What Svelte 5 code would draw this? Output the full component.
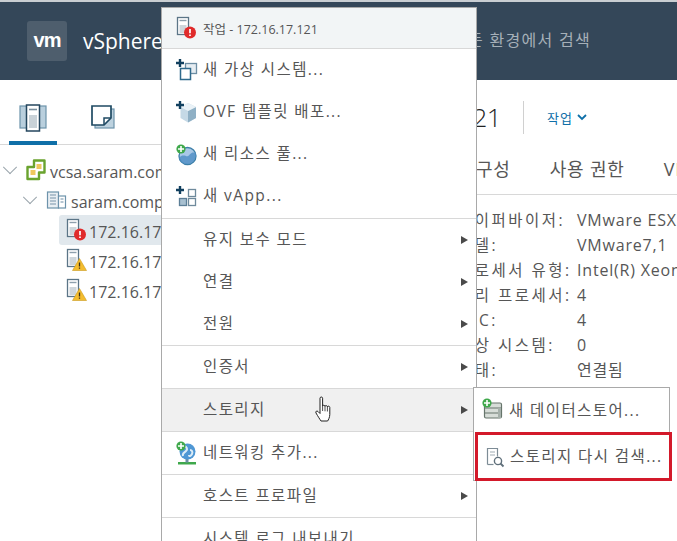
<script>
  const menu = [
    { group: true, items: [
      { label: '새 가상 시스템...', icon: 'vm' },
      { label: 'OVF 템플릿 배포...', icon: 'ovf' },
      { label: '새 리소스 풀...', icon: 'pool' },
      { label: '새 vApp...', icon: 'vapp' }
    ]},
    { items: [
      { label: '유지 보수 모드', sub: true },
      { label: '연결', sub: true },
      { label: '전원', sub: true }
    ]},
    { items: [{ label: '인증서', sub: true }] },
    { items: [{ label: '스토리지', sub: true, hover: true }] },
    { items: [{ label: '네트워킹 추가...', icon: 'net' }] },
    { items: [{ label: '호스트 프로파일', sub: true }] },
    { items: [{ label: '시스템 로그 내보내기' }] }
  ];

  const facts = [
    ['하이퍼바이저:', 'VMware ESXi, 7.0.0'],
    ['모델:', 'VMware7,1'],
    ['프로세서 유형:', 'Intel(R) Xeon(R) CPU'],
    ['논리 프로세서:', '4'],
    ['NIC:', '4'],
    ['가상 시스템:', '0'],
    ['상태:', '연결됨']
  ];

  const hosts = [
    { name: '172.16.17.121', state: 'err', selected: true },
    { name: '172.16.17.122', state: 'warn' },
    { name: '172.16.17.123', state: 'warn' }
  ];
</script>

{#snippet plus(x, y)}
  <path d="M{x - 4} {y}h8M{x} {y - 4}v8" stroke="#12405f" stroke-width="2.4" fill="none" />
{/snippet}

{#snippet greenPlus(x, y)}
  <circle cx={x} cy={y} r="4.6" fill="#3fa84b" />
  <path d="M{x - 3} {y}h6M{x} {y - 3}v6" stroke="#fff" stroke-width="1.6" />
{/snippet}

{#snippet host(state)}
  <svg class="icon" width="22" height="24" viewBox="0 0 22 24">
    <rect x="1.5" y="1.5" width="11" height="17" fill="#fff" stroke="#5b7587" stroke-width="1.3" />
    <rect x="3.5" y="9" width="7" height="8" fill="#cfd6db" />
    <path d="M3.5 4.5h7" stroke="#8ea0ad" stroke-width="1.4" />
    {#if state === 'err'}
      <circle cx="14" cy="16.5" r="6" fill="#e02b2b" />
      <path d="M14 13v4.2M14 18.6v1.4" stroke="#fff" stroke-width="1.7" />
    {:else}
      <path d="M13.5 10.5L20.5 22.5H6.5Z" fill="#f4bc2e" stroke="#c99a1c" stroke-width=".6" />
      <path d="M13.5 14.5v4M13.5 19.5v1.3" stroke="#3a3018" stroke-width="1.3" />
    {/if}
  </svg>
{/snippet}

{#snippet menuIcon(name)}
  <svg class="icon" width="24" height="24" viewBox="0 0 24 24">
    {#if name === 'vm'}
      <rect x="10.5" y="5.500" width="11" height="10" fill="#e6edf2" stroke="#6d8ea4" stroke-width="1.300" />
      <rect x="5.500" y="10.500" width="10" height="11" fill="#fff" stroke="#2f6a8c" stroke-width="1.500" />
      {@render plus(5, 5)}
    {:else if name === 'ovf'}
      <path d="M13 3l8 4v11l-8 4.500L5.500 18V7Z" fill="#c5d9e6" />
      <path d="M13 11l8-4v11l-8 4.500Z" fill="#8fb0c5" />
      <path d="M5.500 7L13 3l8 4-8 4Z" fill="#eaf2f7" />
      {@render plus(5, 5)}
    {:else if name === 'pool'}
      <circle cx="12.500" cy="13" r="8.500" fill="#a9c8e6" stroke="#3c7fa8" stroke-width="1.300" />
      <path d="M4 15c4-5 7-1 9-2s3-5 8-3c.5 7-4 11-8.500 11S5 19 4 15Z" fill="#4e8dc4" opacity=".8" />
      {@render greenPlus(6, 6)}
    {:else if name === 'vapp'}
      <rect x="13.500" y="4.500" width="7" height="7" fill="#fff" stroke="#6f8a9c" stroke-width="1.300" />
      <rect x="4.500" y="13.500" width="7" height="7" fill="#a8c0d0" stroke="#5c7f97" stroke-width="1.300" />
      <rect x="13.500" y="13.500" width="7" height="7" fill="#fff" stroke="#6f8a9c" stroke-width="1.300" />
      {@render plus(5, 5)}
    {:else if name === 'net'}
      <path d="M3 21h18v2.500H3Z" fill="#3fa84b" />
      <rect x="10.500" y="17" width="3" height="4.500" fill="#6d8ea4" />
      <circle cx="12.500" cy="10.500" r="8" fill="#4f97d4" />
      <path d="M9 5c3 1 4 3 2 5s-4 2-3 5M15 9c2 0 3 2 2 4s-3 3-3 1" stroke="#dcecf7" stroke-width="2" fill="none" />
      {@render greenPlus(6, 5)}
    {:else if name === 'store'}
      <rect x="3.500" y="5" width="17" height="15" rx="1.500" fill="#d7ddd8" stroke="#66756b" stroke-width="1.200" />
      <path d="M3.500 10h17M3.500 15h17" stroke="#66756b" stroke-width="1.200" />
      <path d="M17 10h3v10h-3Z" fill="#a5b0aa" />
      {@render greenPlus(6, 5)}
    {:else if name === 'rescan'}
      <path d="M4.500 19.500V3.500h10v8" fill="#fff" stroke="#7d8c96" stroke-width="1.200" />
      <path d="M4.500 19.500h6" stroke="#7d8c96" stroke-width="1.200" />
      <path d="M7 7h5M7 10h5" stroke="#9fabb3" stroke-width="1.200" />
      <circle cx="15" cy="16" r="3.600" fill="none" stroke="#5f6f7a" stroke-width="1.400" />
      <path d="M17.500 18.500l3 3" stroke="#5f6f7a" stroke-width="1.800" />
    {/if}
  </svg>
{/snippet}

<div class="page">
  <header class="topbar">
    <div class="logo">vm</div>
    <div class="product">vSphere Client</div>
    <div class="search">모든 환경에서 검색</div>
  </header>

  <div class="content">
    <aside class="sidebar">
      <div class="side-tabs">
        <div class="side-tab active">
          <svg width="30" height="28" viewBox="0 0 30 28">
            <rect x="2" y="2" width="26" height="22" fill="#b9cfdd" stroke="#6d93ab" stroke-width="1.200" />
            <rect x="8.500" y="1" width="13" height="26" fill="#fff" stroke="#24465e" stroke-width="1.500" />
            <rect x="11" y="11" width="8" height="13" fill="#c9d2d8" />
            <path d="M11 5.500h8" stroke="#7a8f9e" stroke-width="1.600" />
          </svg>
        </div>
        <div class="side-tab">
          <svg width="26" height="26" viewBox="0 0 26 26">
            <rect x="5" y="5" width="19" height="19" fill="#bdd2df" stroke="#6d93ab" stroke-width="1.200" />
            <path d="M2 2h19v12l-7 7H2Z" fill="#fff" stroke="#1f4a63" stroke-width="1.700" />
            <path d="M21 14h-7v7" fill="none" stroke="#1f4a63" stroke-width="1.500" />
          </svg>
        </div>
      </div>
      <ul class="tree">
        <li class="node">
          <span class="caret"></span>
          <svg class="icon" width="20" height="22" viewBox="0 0 20 22">
            <path d="M8 1.500h10.500v12H13v6.500H1.500V8H8Z" fill="#fff" stroke="#6aa32e" stroke-width="2.400" stroke-linejoin="round" />
            <rect x="4.500" y="11" width="5" height="5" fill="#efc75e" />
            <rect x="10.500" y="5" width="5" height="5" fill="#efc75e" />
          </svg>
          <span class="name">vcsa.saram.com</span>
        </li>
        <li class="node level-1">
          <span class="caret"></span>
          <svg class="icon" width="21" height="20" viewBox="0 0 21 20">
            <rect x="1.500" y="2" width="11" height="16" fill="#e9eff3" stroke="#6d93ab" stroke-width="1.200" />
            <rect x="12.500" y="6" width="7" height="12" fill="#fff" stroke="#6d93ab" stroke-width="1.200" />
            <path d="M4 5h6M4 8h6M4 11h6M4 14h6M14.500 9h3M14.500 12h3" stroke="#9db3c2" stroke-width="1.300" />
          </svg>
          <span class="name">saram.company</span>
        </li>
        {#each hosts as h}
          <li class="node level-2" class:selected={h.selected}>
            {@render host(h.state)}
            <span class="name">{h.name}</span>
          </li>
        {/each}
      </ul>
    </aside>

    <main class="main">
      <div class="title-row">
        <h1>172.16.17.121</h1>
        <div class="rule"></div>
        <div class="actions">작업
          <svg width="10" height="7" viewBox="0 0 10 7"><path d="M1 1l4 4 4-4" fill="none" stroke="#0f6fa8" stroke-width="1.800" /></svg>
        </div>
      </div>
      <nav class="tabs">
        <span>구성</span>
        <span>사용 권한</span>
        <span>VM</span>
      </nav>
      <dl class="facts">
        {#each facts as [k, v]}
          <dt>{k}</dt>
          <dd>{v}</dd>
        {/each}
      </dl>
    </main>
  </div>

  <div class="menu">
    <div class="menu-head">
      {@render host('err')}
      <span>작업 - 172.16.17.121</span>
    </div>
    {#each menu as section}
      <div class="section" class:first={section.group}>
        {#each section.items as item}
          <div class="item" class:hover={item.hover}>
            <span class="slot">
              {#if item.icon}{@render menuIcon(item.icon)}{/if}
            </span>
            <span class="label">{item.label}</span>
            {#if item.sub}<span class="arrow"></span>{/if}
          </div>
        {/each}
      </div>
    {/each}
  </div>

  <div class="submenu">
    <div class="sub-item">
      {@render menuIcon('store')}
      <span>새 데이터스토어...</span>
    </div>
    <div class="sub-item marked">
      {@render menuIcon('rescan')}
      <span>스토리지 다시 검색...</span>
    </div>
  </div>

  <svg class="cursor" width="20" height="27" viewBox="0 0 20 27">
    <path d="M6 2.200c0-1.600 2.600-1.600 2.600 0V10c0-1 2.400-1 2.400.3 0-1 2.400-1 2.400.4 .2-.9 2.400-.8 2.400.7v7c0 3-1.500 5.600-2.200 6.600H7c-1-1.500-3-4.500-5-8-.9-1.600.9-2.600 2-1.500l2 2Z" fill="#fff" stroke="#222" stroke-width="1" stroke-linejoin="round" />
    <path d="M8.600 10v5M11 10.300v5M13.400 10.700v4.800" stroke="#222" stroke-width=".8" fill="none" />
  </svg>
</div>

<style>
  :global(body) {
    margin: 0;
    background: #fff;
  }

  .page {
    position: relative;
    width: 677px;
    height: 541px;
    overflow: hidden;
    font-family: "Open Sans", "Noto Sans CJK KR", sans-serif;
    color: #565656;
    background: #fff;
  }

  .topbar {
    display: flex;
    align-items: center;
    height: 78px;
    border-top: 2px solid #c9ced2;
    background: #344759;
    color: #fff;
    padding-left: 27px;
  }

  .logo {
    width: 40px;
    height: 40px;
    border-radius: 3px;
    background: #4e5e6d;
    text-align: center;
    font: 700 20px/38px "Liberation Sans", sans-serif;
    letter-spacing: -1px;
  }

  .product {
    margin-left: 16px;
    font-size: 21px;
    white-space: nowrap;
    width: 369px;
  }

  .search {
    font-size: 16px;
    letter-spacing: 1.300px;
    color: #a6b0b8;
    white-space: nowrap;
    padding-bottom: 4px;
  }

  .content {
    display: flex;
  }

  .sidebar {
    width: 300px;
    flex: none;
  }

  .side-tabs {
    display: flex;
    height: 64px;
    border-bottom: 1px solid #d8d8d8;
    padding-left: 9px;
  }

  .side-tab {
    width: 48px;
    margin-right: 22px;
    padding-top: 24px;
    box-sizing: border-box;
    text-align: center;
  }

  .side-tab.active {
    border-bottom: 4px solid #0f6fa8;
    height: 65px;
  }

  .tree {
    list-style: none;
    margin: 10px 0 0;
    padding: 0;
    font-size: 16px;
  }

  .node {
    display: flex;
    align-items: center;
    height: 30px;
    white-space: nowrap;
    padding-left: 4px;
  }

  .node .icon {
    flex: none;
    margin-right: 4px;
  }

  .name {
    padding-top: 3px;
  }

  .level-1 {
    padding-left: 24px;
  }

  .level-2 {
    margin-left: 59px;
    padding-left: 7px;
    border-radius: 3px 0 0 3px;
  }

  .level-2 .icon {
    margin-right: 1px;
  }

  .selected {
    background: #e1e8ed;
  }

  .caret {
    width: 9px;
    height: 9px;
    border-right: 1.500px solid #9aa5ac;
    border-bottom: 1.500px solid #9aa5ac;
    transform: rotate(45deg) translate(-2px, -2px);
    margin-right: 11px;
    margin-left: 1px;
  }

  .main {
    flex: 1;
    min-width: 0;
    white-space: nowrap;
  }

  .title-row {
    display: flex;
    align-items: center;
    height: 54px;
    margin-top: 10px;
  }

  h1 {
    width: 201px;
    margin: 0;
    font-size: 26px;
    font-weight: 300;
    color: #222;
    text-align: right;
    letter-spacing: -.6px;
  }

  .rule {
    width: 1px;
    height: 33px;
    background: #d0d0d0;
    margin-left: 22px;
  }

  .actions {
    margin-left: 23px;
    font-size: 13px;
    color: #0f6fa8;
    letter-spacing: 1px;
    display: flex;
    align-items: center;
    gap: 4px;
  }

  .tabs {
    display: flex;
    gap: 39px;
    height: 51px;
    padding-left: 176px;
    padding-top: 12px;
    border-bottom: 1px solid #d8d8d8;
    font-size: 18px;
    letter-spacing: .8px;
    line-height: 26px;
    box-sizing: border-box;
  }

  .facts {
    display: grid;
    grid-template-columns: 119px auto;
    grid-auto-rows: 25px;
    margin: 14px 0 0 158px;
    font-size: 15.500px;
    line-height: 23px;
  }

  .facts dt,
  .facts dd {
    margin: 0;
  }

  .facts dt {
    letter-spacing: 2.500px;
  }

  .facts dd {
    font-size: 16px;
    letter-spacing: .8px;
  }

  .menu {
    position: absolute;
    left: 161px;
    top: 7px;
    width: 314px;
    background: #fff;
    border: 1px solid #a9a9a9;
    border-bottom: 0;
    font-size: 15.500px;
    color: #565656;
    letter-spacing: 1.400px;
  }

  .menu-head {
    display: flex;
    align-items: center;
    gap: 5px;
    height: 40px;
    padding-left: 14px;
    background: #f2f5f6;
    font-size: 12.500px;
    letter-spacing: 0;
  }

  .section {
    border-top: 1px solid #d8d8d8;
  }

  .item {
    display: flex;
    align-items: center;
    height: 42px;
    padding-right: 8px;
    white-space: nowrap;
  }

  .section.first .item {
    height: 42.250px;
  }

  .item.hover {
    background: #f0f0f0;
  }

  .slot {
    width: 37px;
    flex: none;
    display: flex;
    justify-content: flex-end;
    margin-right: 4px;
    height: 24px;
  }

  .label {
    flex: 1;
    padding-bottom: 4px;
  }

  .arrow {
    width: 0;
    height: 0;
    border-left: 7px solid #4a4a4a;
    border-top: 4px solid transparent;
    border-bottom: 4px solid transparent;
  }

  .submenu {
    position: absolute;
    left: 473px;
    top: 387px;
    width: 197px;
    background: #fff;
    border: 1px solid #a9a9a9;
    font-size: 15.500px;
    letter-spacing: 1.400px;
    box-sizing: border-box;
    height: 94px;
  }

  .sub-item {
    display: flex;
    align-items: center;
    gap: 4px;
    height: 44px;
    padding-left: 7px;
    white-space: nowrap;
  }

  .sub-item span {
    padding-bottom: 2px;
  }

  .sub-item.marked {
    position: absolute;
    left: 1px;
    top: 44px;
    width: 197px;
    height: 49px;
    box-sizing: border-box;
    border: 3px solid #d3192a;
    padding-left: 5px;
    gap: 3px;
    background: #fff;
  }

  .cursor {
    position: absolute;
    left: 314px;
    top: 396px;
  }
</style>
